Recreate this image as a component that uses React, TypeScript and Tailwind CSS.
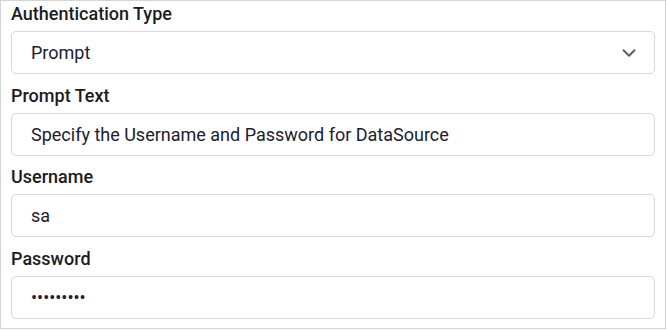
import { ChevronDown } from "lucide-react";

const Field = ({ label, className, children }: { label: string; className?: string; children: React.ReactNode }) => (
  <div className={"flex flex-col " + (className ?? "")}>
    <label className="h-5 leading-5 text-[18px] font-medium text-[#1a1c24]">{label}</label>
    <div className="mt-[7px]">{children}</div>
  </div>
);

const boxClass =
  "h-[43px] w-full flex items-center rounded-[5px] border border-[#d6d8de] bg-white pl-[19px] pr-3 text-[18px] text-[#1c2030]";

export default function App() {
  return (
    <div className="bg-white font-['Roboto',sans-serif]">
      <div className="w-[666px] h-[329px] border border-[#d4d4d4] px-[10px] pt-[3px] flex flex-col">
        <Field label="Authentication Type">
          <div className={boxClass + " justify-between"}>
            <span>Prompt</span>
            <ChevronDown className="w-[22px] h-[22px] text-[#5a5f6b] mr-[2px]" strokeWidth={2.2} />
          </div>
        </Field>
        <Field label="Prompt Text" className="mt-3">
          <div className={boxClass}>Specify the Username and Password for DataSource</div>
        </Field>
        <Field label="Username" className="mt-[11px]">
          <div className={boxClass}>sa</div>
        </Field>
        <Field label="Password" className="mt-3">
          <div className={boxClass}>•••••••••</div>
        </Field>
      </div>
    </div>
  );
}
